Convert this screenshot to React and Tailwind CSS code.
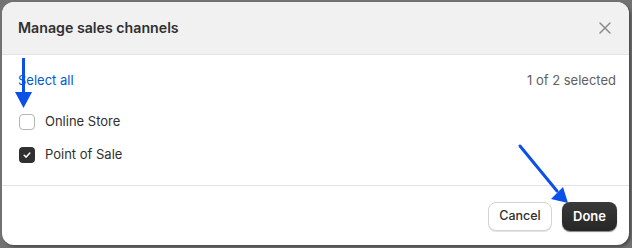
import React from "react";

function Checkbox({ checked }) {
  if (checked) {
    return (
      <span className="flex h-4 w-4 items-center justify-center rounded-[4px] bg-[#303030]">
        <svg width="10" height="10" viewBox="0 0 10 10" fill="none">
          <path d="M2.2 5.2 L4.2 7.1 L7.8 3" stroke="white" strokeWidth="1.5" strokeLinecap="round" strokeLinejoin="round" />
        </svg>
      </span>
    );
  }
  return <span className="block h-4 w-4 rounded-[4px] border border-[#b5b5b5] bg-white" />;
}

export default function App() {
  return (
    <div
      className="relative h-[248px] w-[632px] bg-[#727272] pb-[3px] pl-[2px] pr-[3px] pt-[2px]"
      style={{ fontFamily: "Inter, 'Noto Sans', sans-serif" }}
    >
      <div className="flex h-full flex-col overflow-hidden rounded-[12px] bg-white shadow-[2px_2px_3px_rgba(0,0,0,0.35)]">
        <div className="flex h-[53px] shrink-0 items-center justify-between border-b border-[#e3e3e3] bg-[#f1f1f1] pl-4 pr-[18px]">
          <span className="text-[14.2px] font-semibold text-[#303030]">Manage sales channels</span>
          <svg width="12" height="12" viewBox="0 0 12 12" fill="none">
            <path d="M1 1 L11 11 M11 1 L1 11" stroke="#8a8a8a" strokeWidth="1.5" strokeLinecap="round" />
          </svg>
        </div>
        <div className="flex flex-col pb-[20px] pl-4 pr-[13px] pt-[16px]">
          <div className="flex h-5 items-center justify-between text-[13px]">
            <span className="text-[#005bd3]">Select all</span>
            <span className="text-[#616161]">1 of 2 selected</span>
          </div>
          <div className="mt-[21px] flex flex-col gap-[13px] pl-[1px]">
            <div className="flex h-5 items-center gap-[10px]">
              <Checkbox checked={false} />
              <span className="text-[13px] text-[#303030]">Online Store</span>
            </div>
            <div className="flex h-5 items-center gap-[10px]">
              <Checkbox checked={true} />
              <span className="text-[13px] text-[#303030]">Point of Sale</span>
            </div>
          </div>
        </div>
        <div className="flex flex-1 items-start justify-end gap-[10px] border-t border-[#e3e3e3] pr-[12px] pt-[16px]">
          <button className="h-[29px] w-[64px] rounded-[8px] border border-[#d4d4d4] bg-white text-[12.5px] font-medium text-[#303030] shadow-[0_1px_0_#e3e3e3]">
            Cancel
          </button>
          <button className="h-[29px] w-[55px] rounded-[8px] bg-gradient-to-b from-[#3a3a3a] to-[#262626] text-[13px] font-semibold text-white shadow-[0_1px_1px_rgba(0,0,0,0.5)]">
            Done
          </button>
        </div>
      </div>
      <svg className="pointer-events-none absolute left-0 top-0" width="632" height="248" viewBox="0 0 632 248">
        <line x1="23.5" y1="58" x2="23.5" y2="94" stroke="#0b50e8" strokeWidth="3" />
        <polygon points="15,92 32,92 23.5,108" fill="#0b50e8" />
        <line x1="520" y1="146" x2="557" y2="191" stroke="#0b50e8" strokeWidth="3" strokeLinecap="round" />
        <polygon points="551,199 563,187 568,203" fill="#0b50e8" />
      </svg>
    </div>
  );
}
